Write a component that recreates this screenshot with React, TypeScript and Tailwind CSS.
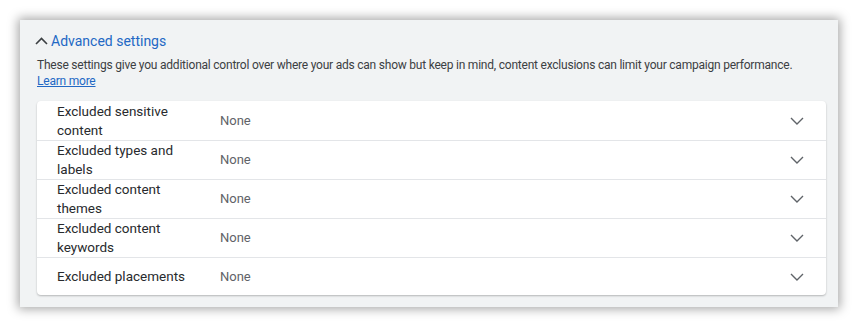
import React from "react";

interface Row {
  label: string;
  value: string;
}

const rows: Row[] = [
  { label: "Excluded sensitive content", value: "None" },
  { label: "Excluded types and labels", value: "None" },
  { label: "Excluded content themes", value: "None" },
  { label: "Excluded content keywords", value: "None" },
  { label: "Excluded placements", value: "None" },
];

const ChevronDown = () => (
  <svg width="14" height="8" viewBox="0 0 14 8" fill="none">
    <path d="M1 1l6 6 6-6" stroke="#5f6368" strokeWidth="1.4" />
  </svg>
);

const ChevronUp = () => (
  <svg width="13" height="8" viewBox="0 0 13 8" fill="none">
    <path d="M1 7l5.5-5.5L12 7" stroke="#3c4043" strokeWidth="1.6" />
  </svg>
);

export default function App() {
  return (
    <div className="w-[858px] h-[327px] bg-white pt-[20px] pl-[20px] font-['Roboto',sans-serif]">
      <div className="w-[818px] h-[287px] bg-[#f1f3f4] shadow-[0_0_10px_2px_rgba(0,0,0,0.35)] pt-[11px] pl-[17px] pr-[12px]">
        {/* header */}
        <div className="flex items-center h-[20px] mb-[6px]">
          <span className="ml-[-2px] mr-[3px] flex items-center">
            <ChevronUp />
          </span>
          <span className="text-[14px] text-[#2368c4] leading-[20px]">Advanced settings</span>
        </div>
        <p className="text-[12px] leading-[16px] text-[#3c4043] tracking-[-0.22px]">
          These settings give you additional control over where your ads can show but keep in mind, content exclusions can limit your campaign performance.
          <br />
          <a className="text-[#2368c4] underline">Learn more</a>
        </p>

        {/* card */}
        <div className="mt-[12px] bg-white rounded-[4px] shadow-[0_1px_2px_rgba(0,0,0,0.25)]">
          {rows.map((row, i) => (
            <div
              key={row.label}
              className={`flex items-center pl-[20px] pr-[22px] ${i > 0 ? "border-t border-[#e3e5e8]" : ""} ${i === rows.length - 1 ? "h-[38px]" : "h-[39px]"}`}
            >
              <div className="w-[163px] shrink-0">
                <p className="w-[130px] text-[13.5px] leading-[19px] text-[#282a2d]">{row.label}</p>
              </div>
              <span className="flex-1 text-[13px] text-[#5f6368]">{row.value}</span>
              <ChevronDown />
            </div>
          ))}
        </div>
      </div>
    </div>
  );
}
